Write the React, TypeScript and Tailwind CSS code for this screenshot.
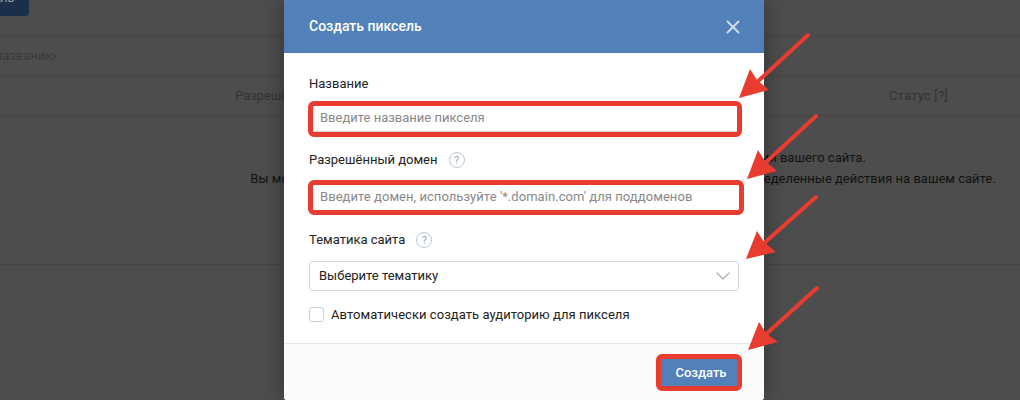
import React from "react";
import { X, ChevronDown } from "lucide-react";

const RED = "#e83c30";

// tail of the shaft, then the three corners of the head
const ARROWS = [
  { tail: [808, 35], neck: [755, 84], head: "739,98 750,69 757,80 769,90" },
  { tail: [816, 116], neck: [763, 165], head: "747,179 758,150 765,161 777,171" },
  { tail: [816, 197], neck: [762, 245], head: "746,259 757,231 764,242 776,252" },
  { tail: [817, 288], neck: [764, 336], head: "748,350 759,322 766,333 778,342" },
];

function HelpIcon() {
  return (
    <span className="ml-[11px] flex h-4 w-4 items-center justify-center rounded-full border border-[#b9c8da] text-[11px] leading-none text-[#93a6bd]">
      ?
    </span>
  );
}

function Background() {
  return (
    <div className="text-[13px] text-[#333]">
      <div className="h-[37px] border-b border-[#444]">
        <div className="h-4 w-[29px] overflow-hidden rounded-br-[3px] bg-[#1a2f4a] text-[13px] leading-[14px] text-[#9aa3ae]">
          <div className="-mt-[9px]">ль</div>
        </div>
      </div>
      <div className="flex h-[39px] items-center border-b border-[#444]">
        <div className="flex w-[56px] justify-end overflow-hidden whitespace-nowrap text-[#3a3a3a]">Поиск по названию</div>
      </div>
      <div className="flex h-10 items-center border-b border-[#444] pl-[235px]">
        <span>Разрешённый домен</span>
        <span className="ml-auto mr-[72px] tracking-[0.2px]">Статус [?]</span>
      </div>
      <div className="flex h-[149px] flex-col items-center border-b border-[#444] pl-[226px] pt-[31px] leading-[21px] text-[#111]">
        <div>У вас пока нет созданных пикселей для ретаргетинга аудитории вашего сайта.</div>
        <div>Вы можете создать пиксель, чтобы собрать аудитории клиентов, совершивших определенные действия на вашем сайте.</div>
      </div>
    </div>
  );
}

function Modal() {
  return (
    <div className="absolute left-[284px] top-0 flex h-[400px] w-[480px] flex-col overflow-hidden rounded-[3px] bg-white shadow-[0_0_24px_rgba(0,0,0,0.35)]">
      <div className="flex h-[53px] shrink-0 items-center justify-between bg-[#5181b8] pl-[25px] pr-5 text-[14px] font-medium text-white">
        <span>Создать пиксель</span>
        <X className="h-[22px] w-[22px] text-[#d5e0ed]" strokeWidth={2} />
      </div>

      <div className="flex-1 pl-6 pr-[22px] text-[13px] text-[#222]">
        <div className="ml-px mt-[22px] leading-[18px]">Название</div>
        <div className="mt-2 h-9 rounded-[6px] border-[5px] border-[#e83c30] bg-white">
          <input
            readOnly
            placeholder="Введите название пикселя"
            className="h-[26px] w-full border-b border-[#cfd4da] bg-transparent pb-0.5 pl-[7px] text-[13px] outline-none placeholder:text-[#888]"
          />
        </div>

        <div className="ml-px mt-[14px] flex h-[18px] items-center">
          Разрешённый домен
          <HelpIcon />
        </div>
        <div className="mt-[11px] h-[35px] w-[436px] rounded-[6px] border-[5px] border-[#e83c30] bg-white">
          <input
            readOnly
            placeholder="Введите домен, используйте '*.domain.com' для поддоменов"
            className="h-[25px] w-full bg-transparent pb-0.5 pl-[7px] text-[13px] tracking-[0.05px] outline-none placeholder:text-[#888]"
          />
        </div>

        <div className="ml-px mt-4 flex h-[18px] items-center">
          Тематика сайта
          <HelpIcon />
        </div>
        <div className="ml-px mr-[3px] mt-3 flex h-[30px] items-center justify-between rounded-[3px] border border-[#d3d9de] pl-[9px] pr-[3px]">
          <span className="-mt-px">Выберите тематику</span>
          <ChevronDown className="h-6 w-6 text-[#a8b0ba]" strokeWidth={1.25} />
        </div>

        <div className="ml-px mt-[15px] flex h-[17px] items-center">
          <span className="h-[15px] w-[15px] rounded-[3px] border border-[#c5d0db] bg-white" />
          <span className="ml-[7px] tracking-[0.05px]">Автоматически создать аудиторию для пикселя</span>
        </div>
      </div>

      <div className="flex h-[57px] shrink-0 items-start justify-end border-t border-[#e4e6e9] bg-[#fafbfc] pr-[22px] pt-[10px]">
        <button className="flex h-[37px] w-[86px] items-center justify-center rounded-[6px] border-[5px] border-[#e83c30] bg-[#5181b8] pl-1 text-[13px] font-medium text-white">
          Создать
        </button>
      </div>
    </div>
  );
}

export default function App() {
  return (
    <div className="relative h-[400px] w-[1020px] overflow-hidden bg-[#4d4d4d] font-['Roboto',sans-serif]">
      <Background />
      <Modal />
      <svg className="absolute left-0 top-0" width={1020} height={400}>
        {ARROWS.map((a) => (
          <g key={a.head}>
            <line x1={a.tail[0]} y1={a.tail[1]} x2={a.neck[0]} y2={a.neck[1]} stroke={RED} strokeWidth={4} strokeLinecap="round" />
            <polygon points={a.head} fill={RED} />
          </g>
        ))}
      </svg>
    </div>
  );
}
